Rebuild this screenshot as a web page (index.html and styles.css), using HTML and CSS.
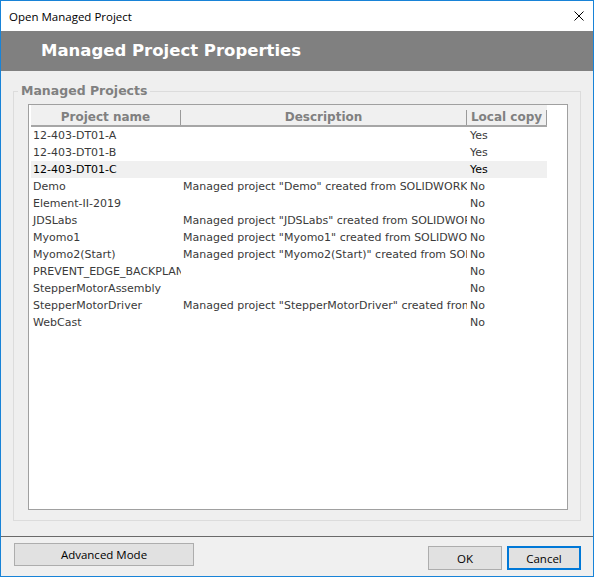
FILE: index.html
```html
<!DOCTYPE html>
<html>
<head>
<meta charset="utf-8">
<link rel="stylesheet" href="styles.css">
</head>
<body>
<div class="window">
  <div class="titlebar">
    <span class="title">Open Managed Project</span>
    <svg class="close" width="10" height="10" viewBox="0 0 10 10"><path d="M0.5 0.5 L9.5 9.5 M9.5 0.5 L0.5 9.5" stroke="#000" stroke-width="1" fill="none"/></svg>
  </div>
  <div class="banner">Managed Project Properties</div>
  <div class="content">
    <fieldset class="group">
      <legend class="legend">Managed Projects</legend>
      <div class="listbox">
        <div class="head">
          <div class="hcell c1">Project name</div>
          <div class="hcell c2">Description</div>
          <div class="hcell c3">Local copy</div>
        </div>
        <div class="row"><div class="cell c1">12-403-DT01-A</div><div class="cell c2"></div><div class="cell c3">Yes</div></div>
        <div class="row"><div class="cell c1">12-403-DT01-B</div><div class="cell c2"></div><div class="cell c3">Yes</div></div>
        <div class="row selected"><div class="cell c1">12-403-DT01-C</div><div class="cell c2"></div><div class="cell c3">Yes</div></div>
        <div class="row"><div class="cell c1">Demo</div><div class="cell c2">Managed project "Demo" created from SOLIDWORKS PDM</div><div class="cell c3">No</div></div>
        <div class="row"><div class="cell c1">Element-II-2019</div><div class="cell c2"></div><div class="cell c3">No</div></div>
        <div class="row"><div class="cell c1">JDSLabs</div><div class="cell c2">Managed project "JDSLabs" created from SOLIDWORKS PDM</div><div class="cell c3">No</div></div>
        <div class="row"><div class="cell c1">Myomo1</div><div class="cell c2">Managed project "Myomo1" created from SOLIDWORKS PDM</div><div class="cell c3">No</div></div>
        <div class="row"><div class="cell c1">Myomo2(Start)</div><div class="cell c2">Managed project "Myomo2(Start)" created from SOLIDWORKS PDM</div><div class="cell c3">No</div></div>
        <div class="row"><div class="cell c1">PREVENT_EDGE_BACKPLANE</div><div class="cell c2"></div><div class="cell c3">No</div></div>
        <div class="row"><div class="cell c1">StepperMotorAssembly</div><div class="cell c2"></div><div class="cell c3">No</div></div>
        <div class="row"><div class="cell c1">StepperMotorDriver</div><div class="cell c2">Managed project "StepperMotorDriver" created from SOLIDWORKS PDM</div><div class="cell c3">No</div></div>
        <div class="row"><div class="cell c1">WebCast</div><div class="cell c2"></div><div class="cell c3">No</div></div>
      </div>
    </fieldset>
  </div>
  <div class="footer">
    <button class="btn adv">Advanced Mode</button>
    <div class="spacer"></div>
    <button class="btn ok">OK</button>
    <button class="btn cancel">Cancel</button>
  </div>
</div>
</body>
</html>
```
FILE: styles.css
```css
html, body {
  margin: 0;
  padding: 0;
  background: #ffffff;
}
.window {
  width: 594px;
  height: 577px;
  box-sizing: border-box;
  border: 1px solid #1883d7;
  display: flex;
  flex-direction: column;
  background: #efefef;
  overflow: hidden;
}
.titlebar {
  height: 30px;
  flex: none;
  background: #ffffff;
  display: flex;
  align-items: center;
  padding-left: 8px;
  padding-right: 9px;
}
.title {
  font-family: "Open Sans", "Noto Sans", sans-serif;
  font-size: 11.5px;
  color: #000;
  flex: 1;
}
.close {
  display: block;
}
.banner {
  height: 40px;
  flex: none;
  background: #808080;
  color: #ffffff;
  font-family: "DejaVu Sans", Verdana, sans-serif;
  font-weight: bold;
  font-size: 16.5px;
  line-height: 40px;
  padding-left: 40px;
}
.content {
  flex: 1;
  padding: 12px 12px 0 12px;
}
.group {
  margin: 0;
  width: 568px;
  height: 438px;
  box-sizing: border-box;
  border: 1px solid #dcdcdc;
  padding: 5px 12px 0 14px;
}
.legend {
  font-family: "DejaVu Sans", Verdana, sans-serif;
  font-weight: bold;
  font-size: 12.5px;
  line-height: 16px;
  color: #808080;
  padding: 0 3px;
  margin-left: -10px;
}
.listbox {
  width: 540px;
  height: 406px;
  box-sizing: border-box;
  border: 1px solid #a0a0a0;
  background: #ffffff;
  padding: 0 0 0 2px;
  font-family: "DejaVu Sans", Verdana, sans-serif;
  font-size: 11px;
}
.head {
  display: flex;
  width: 516px;
  background: #f0f0f0;
  padding-top: 5px;
  border-bottom: 2px solid #a6a6a6;
}
.hcell {
  height: 15px;
  line-height: 14px;
  text-align: center;
  font-weight: bold;
  font-size: 12px;
  color: #808080;
  border-right: 1px solid #9a9a9a;
  box-sizing: border-box;
  overflow: hidden;
  white-space: nowrap;
}
.c1 { width: 150px; flex: none; }
.c2 { width: 286px; flex: none; }
.c3 { width: 80px; flex: none; }
.row {
  display: flex;
  width: 516px;
  height: 17px;
  line-height: 17px;
  color: #3a3a3a;
}
.row.selected {
  background: #f0f0f0;
  color: #000000;
}
.cell {
  overflow: hidden;
  white-space: nowrap;
  padding-left: 2px;
  box-sizing: border-box;
}
.cell.c2 { padding-right: 1px; }
.cell.c3 { padding-left: 3px; }
.footer {
  height: 39px;
  flex: none;
  border-top: 1px solid #6a6a6a;
  background: #f0f0f0;
  display: flex;
  align-items: flex-start;
  padding: 0 12px 0 13px;
}
.spacer { flex: 1; }
.btn {
  font-family: "Open Sans", "Noto Sans", sans-serif;
  font-size: 11.5px;
  color: #000;
  background: #e1e1e1;
  border: 1px solid #adadad;
  box-sizing: border-box;
  padding: 0;
  margin: 0;
}
.adv {
  width: 180px;
  height: 23px;
  margin-top: 6px;
}
.ok {
  width: 74px;
  height: 24px;
  margin-top: 9px;
  margin-right: 5px;
}
.cancel {
  width: 74px;
  height: 24px;
  margin-top: 9px;
  border: 2px solid #0078d7;
}
```
